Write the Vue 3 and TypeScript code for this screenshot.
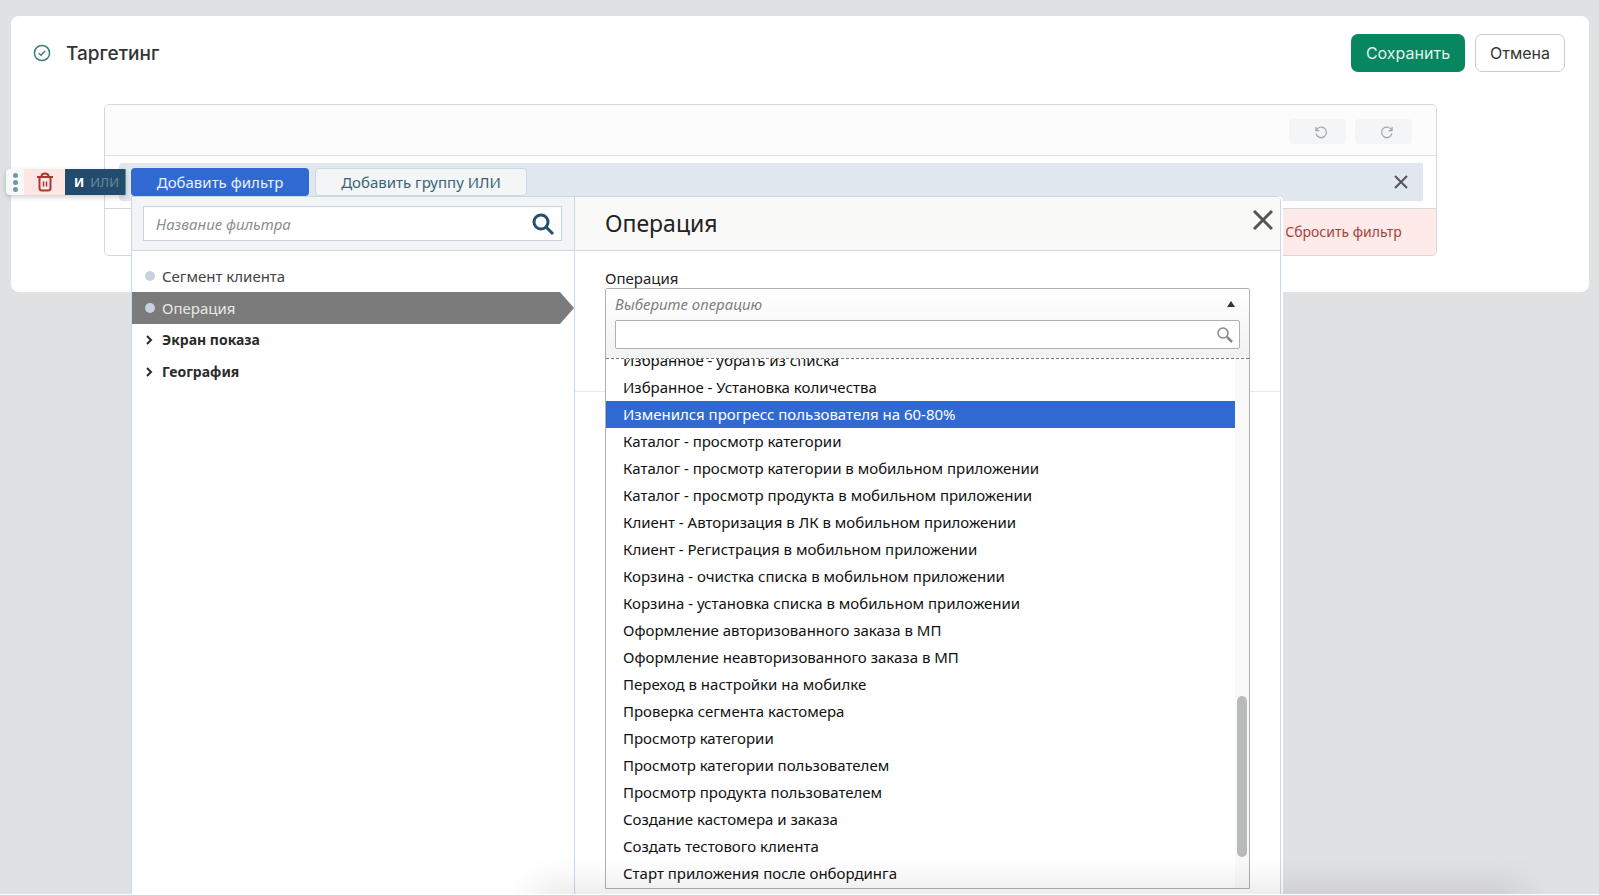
<script setup lang="ts">
import { ref } from 'vue'

interface FilterNode {
  title: string
  group: boolean
}

const filters: FilterNode[] = [
  { title: 'Сегмент клиента', group: false },
  { title: 'Операция', group: false },
  { title: 'Экран показа', group: true },
  { title: 'География', group: true },
]

const operations: string[] = [
  'Избранное - убрать из списка',
  'Избранное - Установка количества',
  'Изменился прогресс пользователя на 60-80%',
  'Каталог - просмотр категории',
  'Каталог - просмотр категории в мобильном приложении',
  'Каталог - просмотр продукта в мобильном приложении',
  'Клиент - Авторизация в ЛК в мобильном приложении',
  'Клиент - Регистрация в мобильном приложении',
  'Корзина - очистка списка в мобильном приложении',
  'Корзина - установка списка в мобильном приложении',
  'Оформление авторизованного заказа в МП',
  'Оформление неавторизованного заказа в МП',
  'Переход в настройки на мобилке',
  'Проверка сегмента кастомера',
  'Просмотр категории',
  'Просмотр категории пользователем',
  'Просмотр продукта пользователем',
  'Создание кастомера и заказа',
  'Создать тестового клиента',
  'Старт приложения после онбординга',
]

const activeFilter = ref('Операция')
const highlighted = ref(2)
const filterQuery = ref('')
const operationQuery = ref('')
</script>

<template>
  <div class="page">
    <section class="card">
      <header class="card-head">
        <svg class="status" viewBox="0 0 18 18" aria-hidden="true">
          <circle cx="9" cy="9" r="7.6" />
          <path d="M5.8 9.2l2.2 2.1 4.2-4.4" />
        </svg>
        <h1>Таргетинг</h1>
        <button type="button" class="btn save">Сохранить</button>
        <button type="button" class="btn cancel">Отмена</button>
      </header>

      <div class="builder">
        <div class="toolbar">
          <button type="button" class="history" aria-label="Назад">
            <svg viewBox="0 0 16 16"><path d="M2.2 2.4v4h4M2.6 6.2A6 6 0 1 1 2.3 9.6" /></svg>
          </button>
          <button type="button" class="history" aria-label="Вперёд">
            <svg viewBox="0 0 16 16"><path d="M13.8 2.4v4h-4M13.4 6.2A6 6 0 1 0 13.7 9.6" /></svg>
          </button>
        </div>

        <div class="row">
          <div class="group">
            <div class="group-tools">
              <button type="button" class="drag" aria-label="Переместить"><i></i><i></i><i></i></button>
              <button type="button" class="remove" aria-label="Удалить">
                <svg viewBox="0 0 18 20">
                  <path d="M5.5 4.5Q5.500 1.500 9 1.500T12.500 4.500M1 5h16M3.500 5.500V16q0 2.500 2.500 2.500h6q2.500 0 2.500-2.500V5.500" />
                  <path class="slots" d="M7.500 9.500v5M10.500 9.500v5" />
                </svg>
              </button>
              <button type="button" class="logic"><b>И</b><span>ИЛИ</span></button>
            </div>

            <button type="button" class="add primary">Добавить фильтр</button>
            <button type="button" class="add secondary">Добавить группу ИЛИ</button>
            <button type="button" class="group-close" aria-label="Закрыть">
              <svg viewBox="0 0 14 14"><path d="M1 1l12 12M13 1L1 13" /></svg>
            </button>

            <div class="popup">
              <div class="side">
                <div class="side-head">
                  <label class="search">
                    <input v-model="filterQuery" type="text" placeholder="Название фильтра" aria-label="Название фильтра" />
                    <svg viewBox="0 0 24 24" aria-hidden="true">
                      <circle cx="10" cy="10" r="7" />
                      <path d="M15 15l7 7" />
                    </svg>
                  </label>
                </div>
                <ul class="filters">
                  <li
                    v-for="item in filters"
                    :key="item.title"
                    :class="{ parent: item.group, active: item.title === activeFilter }"
                    @click="activeFilter = item.title"
                  >
                    <svg v-if="item.group" viewBox="0 0 8 10" aria-hidden="true"><path d="M2 1l4 4-4 4" /></svg>
                    <i v-else></i>
                    <span>{{ item.title }}</span>
                  </li>
                </ul>
              </div>

              <div class="detail">
                <div class="detail-head">
                  <h2>Операция</h2>
                  <button type="button" aria-label="Закрыть окно">
                    <svg viewBox="0 0 20 20"><path d="M1 1l18 18M19 1L1 19" /></svg>
                  </button>
                </div>
                <div class="detail-body">
                  <span id="operation-label" class="field-label">Операция</span>
                  <div class="dropdown">
                    <div class="dropdown-top">
                      <button type="button" class="dropdown-toggle" aria-labelledby="operation-label" aria-expanded="true">
                        <em>Выберите операцию</em>
                        <i></i>
                      </button>
                      <label class="dropdown-search">
                        <input v-model="operationQuery" type="text" aria-label="Поиск операции" />
                        <svg viewBox="0 0 16 16" aria-hidden="true">
                          <circle cx="6" cy="6" r="5" />
                          <path class="handle" d="M10 10l5 5" />
                        </svg>
                      </label>
                    </div>
                    <div class="dropdown-view">
                      <ul role="listbox" aria-labelledby="operation-label">
                        <li
                          v-for="(name, index) in operations"
                          :key="name"
                          role="option"
                          :aria-selected="index === highlighted"
                          :class="{ hot: index === highlighted }"
                          @mouseenter="highlighted = index"
                        >{{ name }}</li>
                      </ul>
                      <div class="track"><div class="thumb"></div></div>
                    </div>
                  </div>
                </div>
              </div>
            </div>
          </div>
        </div>

        <footer class="builder-foot">
          <button type="button" class="reset">Сбросить фильтр</button>
        </footer>
      </div>
    </section>
    <div class="dock-shadow"></div>
  </div>
</template>

<style>
body {
  margin: 0;
  background: #fff;
}
</style>

<style scoped>
* {
  box-sizing: border-box;
}

.page {
  position: relative;
  height: calc(100vh - 1px);
  overflow: hidden;
  padding: 16px 10px 16px 11px;
  background: #e0e1e3;
  color: #222;
  font-family: 'Noto Sans', 'Open Sans', sans-serif;
  font-size: 15px;
}

button {
  margin: 0;
  padding: 0;
  border: 0;
  background: none;
  color: inherit;
  font: inherit;
  cursor: pointer;
}

svg {
  display: block;
  fill: none;
  stroke: currentColor;
}

ul {
  margin: 0;
  padding: 0;
  list-style: none;
}

.card {
  border-radius: 8px;
  background: #fff;
  padding: 18px 0 36px;
}

.card-head {
  display: flex;
  align-items: center;
  padding: 0 24px 0 22px;
  font-family: Inter, Roboto, sans-serif;
}

.status {
  width: 18px;
  height: 18px;
  color: #3d7f76;
  stroke-width: 1.5;
}

.card-head h1 {
  flex: 1;
  margin: 0 0 0 15px;
  padding-top: 1px;
  color: #333;
  font-size: 19px;
  font-weight: 500;
  line-height: 24px;
}

.btn {
  height: 38px;
  border-radius: 7px;
  font-size: 16px;
}

.save {
  width: 114px;
  background: #078660;
  color: #e2f3ec;
}

.cancel {
  width: 90px;
  margin-left: 10px;
  border: 1px solid #c6cdd1;
  color: #333;
}

.builder {
  margin: 32px 152px 0 93px;
  border: 1px solid #d5d7d9;
  border-radius: 5px;
}

.toolbar {
  display: flex;
  justify-content: flex-end;
  gap: 9px;
  height: 51px;
  padding: 14px 24px 0 0;
  border-bottom: 1px solid #dde3e5;
  border-radius: 4px 4px 0 0;
  background: #fcfcfc;
}

.history {
  display: flex;
  align-items: center;
  width: 57px;
  height: 25px;
  padding-left: 25px;
  border-radius: 4px;
  background: #f3f5f6;
  color: #a3a6a8;
}

.history svg {
  width: 14px;
  height: 14px;
  stroke-width: 1.4;
}

.row {
  padding: 7px 13px 7px 14px;
}

.group {
  position: relative;
  display: flex;
  align-items: center;
  gap: 6px;
  height: 38px;
  padding: 0 15px 0 12px;
  border-radius: 4px 0 0 4px;
  background: #e0e7ee;
}

.group-tools {
  position: absolute;
  top: 6px;
  right: calc(100% - 7px);
  z-index: 3;
  display: flex;
  height: 26px;
  border-radius: 4px 0 0 4px;
  background: #f7f8f8;
  box-shadow: 0 2px 5px rgba(0, 0, 0, 0.2);
}

.drag {
  display: flex;
  flex-direction: column;
  align-items: center;
  justify-content: center;
  gap: 2px;
  width: 18px;
}

.drag i {
  width: 5px;
  height: 5px;
  border-radius: 50%;
  background: #7598a0;
}

.remove {
  display: flex;
  align-items: center;
  justify-content: center;
  width: 41px;
  background: #fde6e4;
  color: #a63a33;
}

.remove svg {
  width: 18px;
  height: 20px;
  stroke-width: 2;
}

.remove .slots {
  stroke-width: 1.5;
}

.logic {
  display: flex;
  align-items: center;
  justify-content: flex-end;
  gap: 6px;
  width: 61px;
  padding-right: 6px;
  border-right: 1px solid #5c9496;
  background: #234b6d;
  color: #fff;
  font-size: 13px;
}

.logic span {
  color: #668a9a;
}

.add {
  height: 28px;
  border-radius: 4px;
}

.primary {
  width: 178px;
  background: #3169d3;
  color: #e9f0ff;
}

.secondary {
  width: 212px;
  border: 1px solid #ccd9e1;
  background: #f3f5f7;
  color: #386475;
}

.group-close {
  margin-left: auto;
  color: #555;
}

.group-close svg {
  width: 14px;
  height: 14px;
  stroke-width: 2;
}

.popup {
  position: absolute;
  top: 33px;
  left: 12px;
  right: 142px;
  z-index: 2;
  display: flex;
  border: 1px solid #c8d9e6;
  border-bottom: 0;
  border-radius: 0 5px 0 0;
  background: #fff;
  box-shadow: 2px 0 0 #fff;
}

.side {
  width: 443px;
  border-right: 1px solid #c8d9e6;
}

.side-head {
  height: 54px;
  padding: 9px 12px 0 11px;
  border-bottom: 1px solid #c8d9e6;
  background: #f2f5f6;
}

.search {
  display: flex;
  align-items: center;
  height: 35px;
  padding: 0 6px 0 12px;
  border: 1px solid #c6d3df;
  background: #fff;
}

.search input,
.dropdown-search input {
  flex: 1;
  min-width: 0;
  padding: 0;
  border: 0;
  outline: 0;
  background: none;
  font: inherit;
}

.search input::placeholder {
  color: #8b8f91;
  font-style: italic;
  opacity: 1;
}

.search svg {
  width: 24px;
  height: 24px;
  color: #23506f;
  stroke-width: 3;
}

.filters {
  padding-top: 9px;
}

.filters li {
  display: flex;
  align-items: center;
  height: 32px;
  padding: 0 0 1px 13px;
  color: #444;
}

.filters i {
  width: 10px;
  height: 10px;
  margin-right: 7px;
  border-radius: 50%;
  background: #c6d2df;
}

.filters svg {
  width: 8px;
  height: 10px;
  margin-right: 9px;
  stroke-width: 2;
}

.filters .parent {
  color: #2b2b2b;
  font-size: 14px;
  font-weight: 700;
}

.filters .active {
  background: #7b7b7b;
  clip-path: polygon(0 0, calc(100% - 14px) 0, 100% 50%, calc(100% - 14px) 100%, 0 100%);
  color: #e8e8e8;
}

.detail {
  flex: 1;
}

.detail-head {
  display: flex;
  align-items: center;
  justify-content: space-between;
  height: 54px;
  padding: 0 7px 8px 30px;
  border-bottom: 1px solid #c8d9e6;
  background: #f9f9f8;
}

.detail-head h2 {
  margin: 0;
  padding-top: 6px;
  font-size: 23px;
  font-weight: 400;
  line-height: 32px;
}

.detail-head svg {
  width: 20px;
  height: 20px;
  color: #555;
  stroke-width: 3;
}

.detail-body {
  padding: 17px 30px 7px;
  background: linear-gradient(#e6eaec, #e6eaec) 0 140px / 100% 1px no-repeat;
}

.field-label {
  display: block;
  line-height: 20px;
  color: #222;
}

.dropdown {
  border: 1px solid #aeb1b2;
  border-radius: 2px 2px 0 0;
  background: #fff;
}

.dropdown-top {
  height: 70px;
  padding: 0 9px;
  border-bottom: 1px dashed #777;
  background: linear-gradient(#fff, #f1f2f2);
}

.dropdown-toggle {
  display: flex;
  align-items: center;
  justify-content: space-between;
  width: 100%;
  height: 31px;
  padding: 0 5px 1px 0;
  color: #808080;
}

.dropdown-toggle i {
  border: 4px solid transparent;
  border-top: 0;
  border-bottom: 6px solid #333;
}

.dropdown-search {
  display: flex;
  align-items: center;
  height: 29px;
  padding: 0 6px;
  border: 1px solid #aeb1b2;
  border-radius: 2px;
  background: #fff;
}

.dropdown-search svg {
  width: 16px;
  height: 16px;
  color: #888;
  stroke-width: 1.5;
}

.dropdown-search .handle {
  stroke-width: 2.5;
}

.dropdown-view {
  display: flex;
  height: 529px;
  overflow: hidden;
}

.dropdown-view ul {
  flex: 1;
  margin-top: -12px;
}

.dropdown-view li {
  height: 27px;
  padding-left: 17px;
  color: #111;
  line-height: 27px;
}

.dropdown-view .hot {
  background: #3169d3;
  color: #fff;
}

.track {
  width: 14px;
  padding: 337px 2px 0;
  background: #f9f9f9;
}

.thumb {
  height: 161px;
  border-radius: 5px;
  background: #b9bbba;
}

.builder-foot {
  display: flex;
  justify-content: flex-end;
  height: 47px;
  border-top: 1px solid #d5d7d9;
}

.reset {
  width: 188px;
  padding: 0 0 2px 3px;
  border-radius: 0 0 4px 0;
  background: #feeae9;
  color: #a3443d;
  font-size: 14px;
}

.dock-shadow {
  position: absolute;
  bottom: -20px;
  left: 540px;
  right: 80px;
  z-index: 5;
  height: 20px;
  box-shadow: 0 0 36px 6px rgba(0, 0, 0, 0.12);
  pointer-events: none;
}
</style>
